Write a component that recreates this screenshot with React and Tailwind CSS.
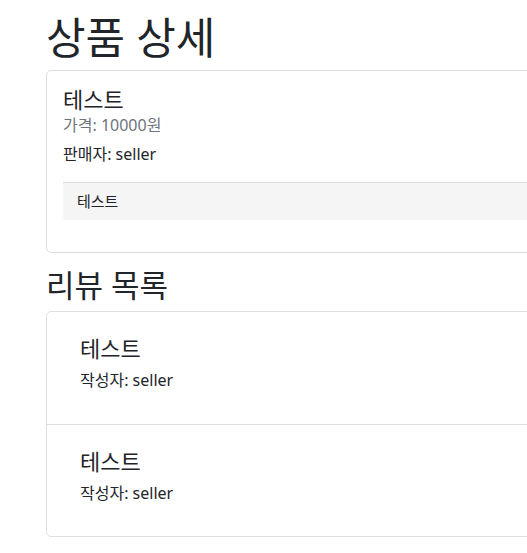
export default function App() {
  const font = { fontFamily: '"Noto Sans", "Noto Sans CJK KR", sans-serif' };
  return (
    <div className="w-[527px] h-[553px] overflow-hidden bg-white text-[#212529]" style={font}>
      <div className="pl-[46px] w-[700px]">
        <h1 className="mt-[14px] mb-[8px] text-[43px] leading-[48px] font-normal">상품 상세</h1>
        <div className="border border-[#dfdfdf] rounded-[5px] p-4">
          <h5 className="text-[22px] leading-[24px] mb-[2px]">테스트</h5>
          <p className="text-[16px] leading-[24px] text-[#6c757d] mb-[5px]">가격: 10000원</p>
          <p className="text-[16px] leading-[24px] mb-[16px]">판매자: seller</p>
          <div className="border-t border-[#dcdcdc] bg-[#f5f5f5] rounded-b-[4px] h-[38px] pl-[14px] pt-[8px] mb-4 text-[15px] leading-[20px]">
            테스트
          </div>
        </div>
        <h3 className="mt-[14px] mb-[8px] text-[31px] leading-[36px]">리뷰 목록</h3>
        <div className="border border-[#dfdfdf] rounded-[5px]">
          {[0, 1].map((i) => (
            <div key={i} className={"h-[112px] px-[33px] pt-[24px] " + (i ? "border-t border-[#dfdfdf]" : "")}>
              <h5 className="text-[22px] leading-[24px] mb-[8px]">테스트</h5>
              <p className="text-[16px] leading-[24px]">작성자: seller</p>
            </div>
          ))}
        </div>
      </div>
    </div>
  );
}
